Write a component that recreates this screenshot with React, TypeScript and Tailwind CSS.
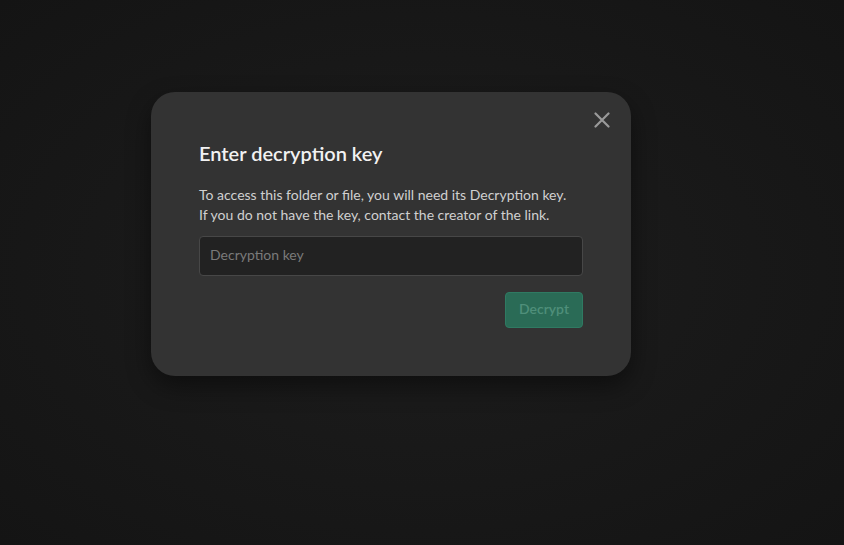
export default function App() {
  return (
    <div
      className="h-[545px] w-[844px] overflow-hidden pl-[151px] pt-[92px] bg-[radial-gradient(ellipse_at_center,#1d1d1d_0%,#191919_45%,#141414_100%)]"
      style={{ fontFamily: 'Lato, "Open Sans", sans-serif' }}
    >
      {/* Dialog */}
      <div className="relative w-[480px] rounded-[24px] bg-[#333333] px-12 pb-12 pt-[47px] shadow-[0_10px_24px_rgba(0,0,0,0.45)]">
        <button className="absolute right-[19px] top-[18px] flex h-5 w-5 items-center justify-center text-[#9a9a9a]">
          <svg width="16" height="16" viewBox="0 0 16 16" fill="none">
            <path d="M1.5 1.5L14.5 14.5M14.5 1.5L1.5 14.5" stroke="currentColor" strokeWidth="2.2" strokeLinecap="round" />
          </svg>
        </button>

        <h2 className="text-[20px] leading-7 font-semibold text-[#f2f2f2]">Enter decryption key</h2>

        <p className="mt-[18px] text-[14px] leading-5 text-[#d0d0d0]">
          To access this folder or file, you will need its Decryption key.
          <br />
          If you do not have the key, contact the creator of the link.
        </p>

        <input
          type="text"
          placeholder="Decryption key"
          className="mt-[11px] block h-[40px] w-full rounded-[4px] border border-[#474747] bg-[#222222] px-[10px] pb-[3px] text-[14px] text-[#dddddd] placeholder-[#7a7a7a] outline-none"
        />

        <div className="mt-4 flex justify-end">
          <button
            disabled
            className="h-[36px] w-[78px] rounded-[4px] border border-[#2f7a62] bg-[#2a6b56] pb-[3px] text-[14px] font-semibold text-[#4f8f7a]"
          >
            Decrypt
          </button>
        </div>
      </div>
    </div>
  )
}
